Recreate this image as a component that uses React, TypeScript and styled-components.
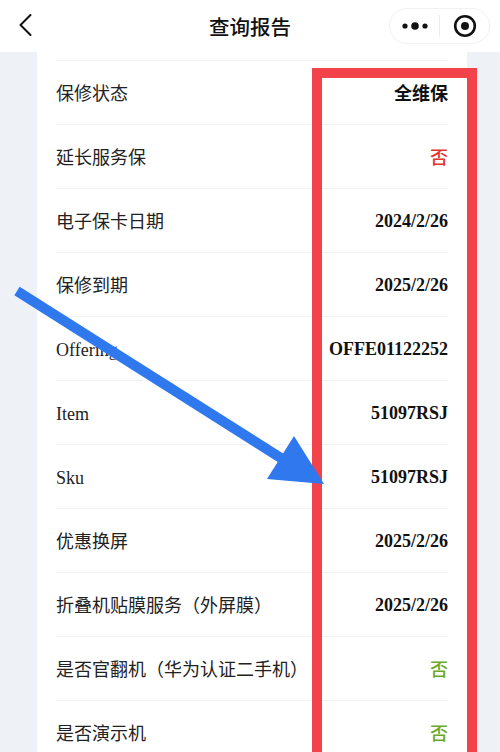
import styled, { createGlobalStyle } from "styled-components";

const GlobalStyle = createGlobalStyle`
  html, body {
    margin: 0;
    padding: 0;
    background: #eef1f6;
  }
  body {
    font-family: "Noto Sans CJK SC", "Noto Sans", sans-serif;
  }
`;

type Tone = "plain" | "red" | "green";

type Row = {
  label: string;
  value: string;
  latin?: boolean;
  serifValue?: boolean;
  tone?: Tone;
};

const ROWS: Row[] = [
  { label: "保修状态", value: "全维保" },
  { label: "延长服务保", value: "否", tone: "red" },
  { label: "电子保卡日期", value: "2024/2/26", serifValue: true },
  { label: "保修到期", value: "2025/2/26", serifValue: true },
  { label: "Offering", value: "OFFE01122252", latin: true, serifValue: true },
  { label: "Item", value: "51097RSJ", latin: true, serifValue: true },
  { label: "Sku", value: "51097RSJ", latin: true, serifValue: true },
  { label: "优惠换屏", value: "2025/2/26", serifValue: true },
  { label: "折叠机贴膜服务（外屏膜）", value: "2025/2/26", serifValue: true },
  { label: "是否官翻机（华为认证二手机）", value: "否", tone: "green" },
  { label: "是否演示机", value: "否", tone: "green" },
];

const TONES: Record<Tone, string> = {
  plain: "#111111",
  red: "#e0342c",
  green: "#6aa82a",
};

export default function App() {
  return (
    <Page>
      <GlobalStyle />
      <NavBar>
        <BackButton aria-label="返回">
          <svg width="16" height="24" viewBox="0 0 16 24">
            <path d="M12.5 2 L2.5 12 L12.5 22" fill="none" stroke="#111" strokeWidth="2" strokeLinecap="round" strokeLinejoin="round" />
          </svg>
        </BackButton>
        <Title>查询报告</Title>
        <Capsule>
          <CapsuleButton>
            <svg width="30" height="10" viewBox="0 0 30 10">
              <circle cx="5" cy="5" r="2.6" fill="#111" />
              <circle cx="15" cy="5" r="3.8" fill="#111" />
              <circle cx="25" cy="5" r="2.6" fill="#111" />
            </svg>
          </CapsuleButton>
          <CapsuleDivider />
          <CapsuleButton>
            <svg width="24" height="24" viewBox="0 0 24 24">
              <circle cx="12" cy="12" r="9.8" fill="none" stroke="#111" strokeWidth="2.6" />
              <circle cx="12" cy="12" r="4" fill="#111" />
            </svg>
          </CapsuleButton>
        </Capsule>
      </NavBar>

      <Card>
        {ROWS.map((row, i) => (
          <ListRow key={i}>
            <Label $latin={row.latin}>{row.label}</Label>
            <Value $serif={row.serifValue} $tone={row.tone ?? "plain"}>
              {row.value}
            </Value>
          </ListRow>
        ))}
      </Card>

      <Markup width="500" height="752" viewBox="0 0 500 752">
        <rect x="317" y="73" width="155" height="700" fill="none" stroke="#f2434b" strokeWidth="10" />
        <line x1="17" y1="291" x2="284" y2="460" stroke="#2f78ee" strokeWidth="10" />
        <polygon points="267,479 294,436 324,484" fill="#2f78ee" />
      </Markup>
    </Page>
  );
}

const Page = styled.div`
  position: relative;
  width: 500px;
  height: 752px;
  overflow: hidden;
  background: #eef1f6;
`;

const NavBar = styled.header`
  height: 52px;
  background: #ffffff;
  display: flex;
  align-items: center;
  justify-content: space-between;
  padding: 0 10px 0 18px;
  position: relative;
`;

const BackButton = styled.div`
  display: flex;
  align-items: center;
  width: 40px;
  margin-top: -2px;
`;

const Title = styled.h1`
  position: absolute;
  left: 0;
  right: 0;
  margin: -1px 0 0;
  text-align: center;
  font-size: 20.5px;
  font-weight: 500;
  color: #111111;
  pointer-events: none;
`;

const Capsule = styled.div`
  display: flex;
  align-items: center;
  height: 36px;
  width: 101px;
  box-sizing: border-box;
  border: 1px solid #f1f1f1;
  border-radius: 18px;
  margin-top: -1px;
`;

const CapsuleButton = styled.div`
  flex: 1;
  display: flex;
  align-items: center;
  justify-content: center;
`;

const CapsuleDivider = styled.div`
  width: 1px;
  height: 22px;
  background: #ececec;
`;

const Card = styled.main`
  margin: 0 33px 0 37px;
  background: #ffffff;
  padding: 8px 19px 0;
  height: 700px;
`;

const ListRow = styled.div`
  height: 63px;
  border-top: 1px solid #f1f2f4;
  display: flex;
  align-items: center;
  justify-content: space-between;
`;

const Label = styled.span<{ $latin?: boolean }>`
  font-size: 18px;
  color: #222222;
  font-family: ${(p) =>
    p.$latin ? `"Liberation Serif", "Noto Sans CJK SC", serif` : `"Noto Sans CJK SC", sans-serif`};
  padding: ${(p) => (p.$latin ? "4px 0 0" : "0 0 2px")};
  white-space: nowrap;
`;

const Value = styled.span<{ $serif?: boolean; $tone: Tone }>`
  font-size: 18px;
  font-weight: ${(p) => (p.$tone === "plain" ? 700 : 500)};
  color: ${(p) => TONES[p.$tone]};
  font-family: ${(p) =>
    p.$serif ? `"Liberation Serif", serif` : `"Noto Sans CJK SC", sans-serif`};
  padding: ${(p) => (p.$serif ? "1px 0 0" : "0 0 2px")};
  white-space: nowrap;
`;

const Markup = styled.svg`
  position: absolute;
  left: 0;
  top: 0;
  pointer-events: none;
`;
